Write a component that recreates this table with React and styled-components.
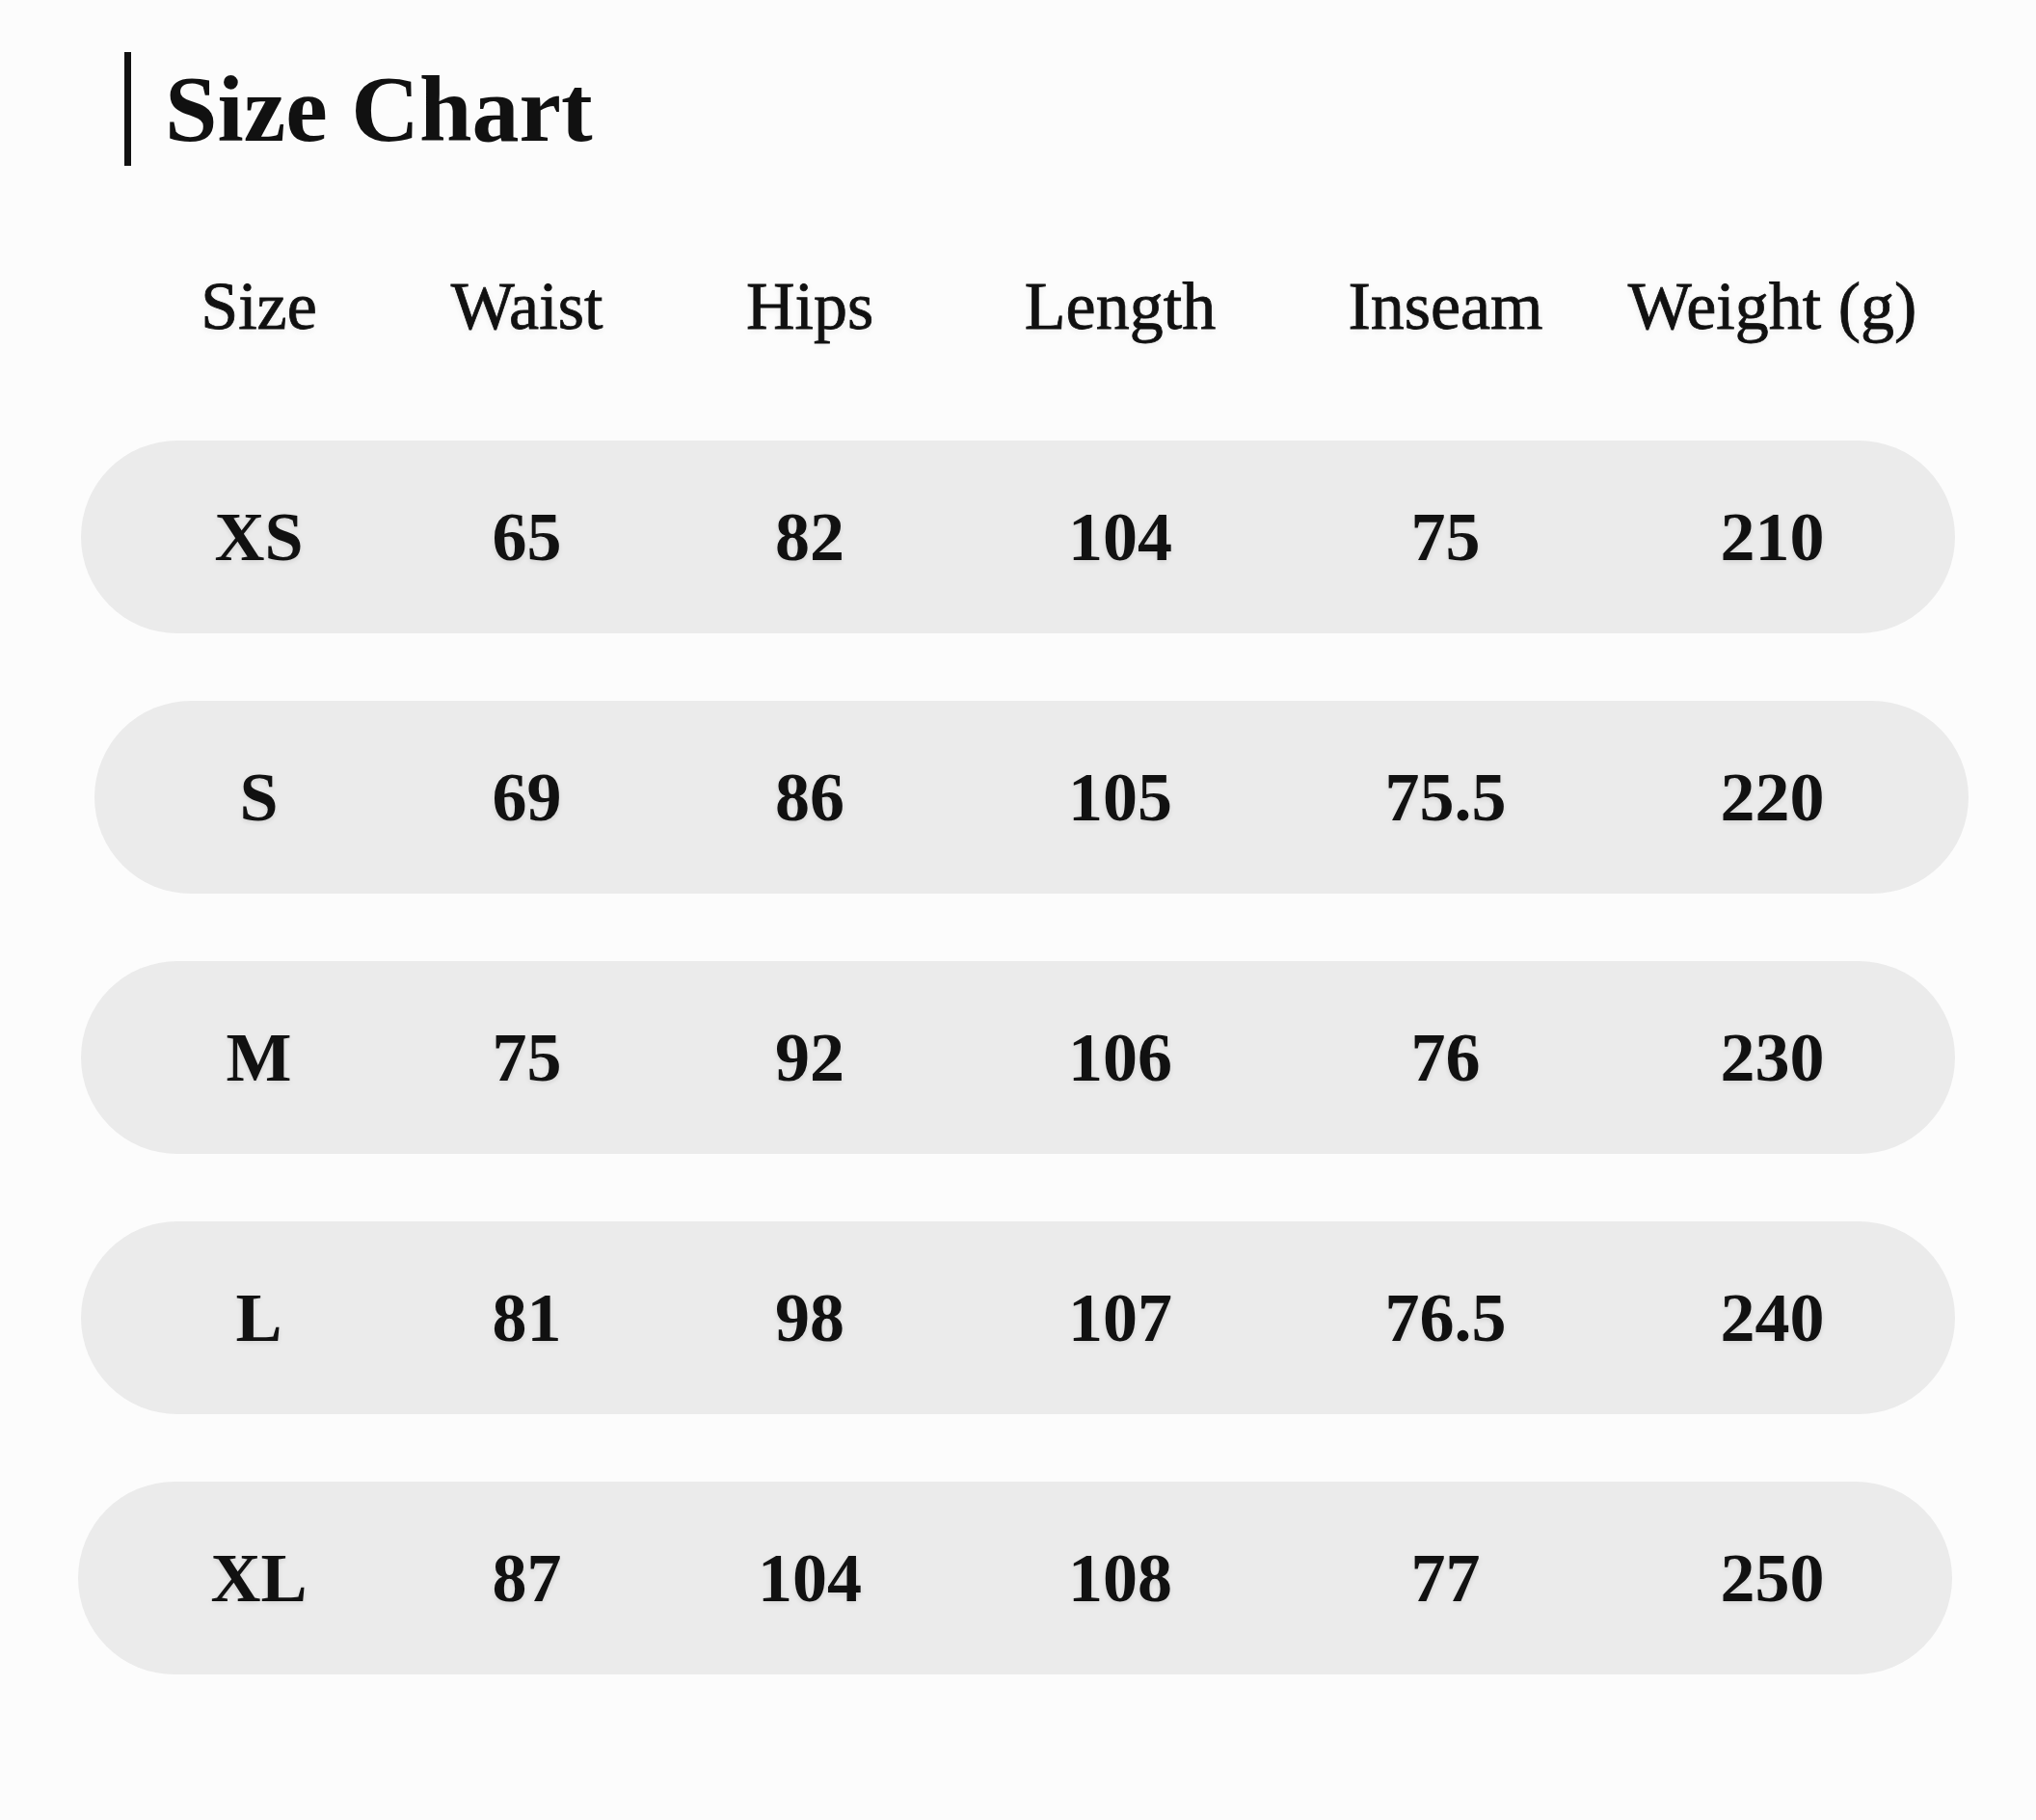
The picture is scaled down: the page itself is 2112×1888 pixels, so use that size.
import styled, { createGlobalStyle } from 'styled-components';

const GlobalStyle = createGlobalStyle`
  html, body {
    margin: 0;
    padding: 0;
    background: #fcfcfc;
  }
  body {
    font-family: 'Liberation Serif', 'Times New Roman', serif;
    color: #111;
  }
`;

const Page = styled.div`
  width: 2112px;
  min-height: 1888px;
  box-sizing: border-box;
  padding: 54px 0 0 84px;
`;

const TitleRow = styled.div`
  display: flex;
  align-items: center;
  gap: 35px;
  margin-left: 45px;
`;

const TitleBar = styled.div`
  width: 7px;
  height: 118px;
  background: #111;
`;

const Title = styled.h1`
  margin: 0;
  font-size: 98px;
  line-height: 1;
  font-weight: 700;
`;

const columns = '277px 279px 308px 336px 339px 339px';

const HeaderRow = styled.div`
  display: grid;
  grid-template-columns: ${columns};
  padding: 0 20px 0 46px;
  margin-top: 111px;
  width: 1944px;
  box-sizing: border-box;
`;

const HeaderCell = styled.div`
  text-align: center;
  font-size: 70px;
  line-height: 1;
  font-weight: 400;
  white-space: nowrap;
  -webkit-text-stroke: 0.8px #111;
  text-shadow: 0 2px 6px rgba(0, 0, 0, 0.08);
`;

const Rows = styled.div`
  display: flex;
  flex-direction: column;
  gap: 70px;
  margin-top: 104px;
`;

const Pill = styled.div`
  display: grid;
  grid-template-columns: ${columns};
  align-items: center;
  width: 1944px;
  height: 200px;
  box-sizing: border-box;
  margin-left: ${p => p.$shift || 0}px;
  padding: 0 20px 0 ${p => 46 - (p.$shift || 0)}px;
  border-radius: 100px;
  background: #ebebeb;
`;

const Cell = styled.div`
  text-align: center;
  font-size: 72px;
  line-height: 1;
  font-weight: 700;
  white-space: nowrap;
  text-shadow: 0 2px 5px rgba(0, 0, 0, 0.1);
`;

const headers = ['Size', 'Waist', 'Hips', 'Length', 'Inseam', 'Weight (g)'];

const rows = [
  { shift: 0, values: ['XS', '65', '82', '104', '75', '210'] },
  { shift: 14, values: ['S', '69', '86', '105', '75.5', '220'] },
  { shift: 0, values: ['M', '75', '92', '106', '76', '230'] },
  { shift: 0, values: ['L', '81', '98', '107', '76.5', '240'] },
  { shift: -3, values: ['XL', '87', '104', '108', '77', '250'] },
];

export default function App() {
  return (
    <>
      <GlobalStyle />
      <Page>
        <TitleRow>
          <TitleBar />
          <Title>Size Chart</Title>
        </TitleRow>
        <HeaderRow>
          {headers.map(h => (
            <HeaderCell key={h}>{h}</HeaderCell>
          ))}
        </HeaderRow>
        <Rows>
          {rows.map(r => (
            <Pill key={r.values[0]} $shift={r.shift}>
              {r.values.map((v, i) => (
                <Cell key={i}>{v}</Cell>
              ))}
            </Pill>
          ))}
        </Rows>
      </Page>
    </>
  );
}
